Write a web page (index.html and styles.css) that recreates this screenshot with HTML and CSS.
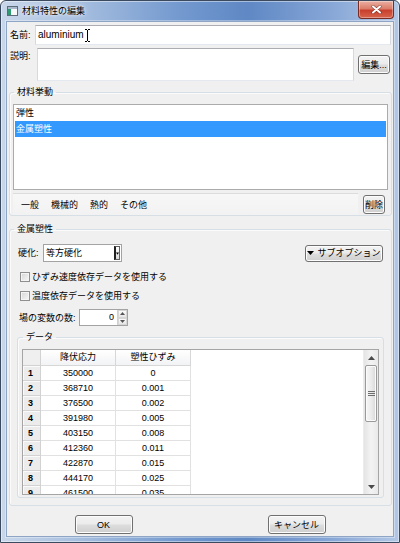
FILE: index.html
```html
<!DOCTYPE html>
<html lang="ja">
<head>
<meta charset="utf-8">
<title>材料特性の編集</title>
<link rel="stylesheet" href="styles.css">
</head>
<body>
<div class="window">
  <div class="titlebar">
    <svg class="app-icon" width="11" height="10" viewBox="0 0 11 10">
      <rect x="0.5" y="0.5" width="10" height="9" fill="#f6f8fa" stroke="#5d6b7a"/>
      <rect x="1" y="1" width="9" height="2" fill="#a9b9cc"/>
      <rect x="1" y="3" width="3" height="6" fill="#2f9a72"/>
    </svg>
    <span class="title">材料特性の編集</span>
    <div class="close">
      <svg width="11" height="9" viewBox="0 0 11 9">
        <path d="M2 1.5 L9 7.5 M9 1.5 L2 7.5" stroke="#5a1a12" stroke-width="3.2" stroke-linecap="round" opacity="0.55"/>
        <path d="M2 1.5 L9 7.5 M9 1.5 L2 7.5" stroke="#ffffff" stroke-width="2" stroke-linecap="round"/>
      </svg>
    </div>
  </div>
  <div class="client">
    <div class="name-row">
      <span class="lbl name-lbl">名前:</span>
      <div class="textbox"><span class="tb-text">aluminium</span>
        <svg class="ibeam" width="5" height="13" viewBox="0 0 5 13">
          <path d="M0 0.5 H2 M3 0.5 H5 M2.5 1 V12 M0 12.5 H2 M3 12.5 H5" stroke="#000" stroke-width="1" fill="none"/>
        </svg>
      </div>
    </div>
    <div class="desc-row">
      <span class="lbl desc-lbl">説明:</span>
      <div class="textarea"></div>
      <div class="btn btn-edit">編集...</div>
    </div>

    <fieldset class="group behaviors">
      <legend>材料挙動</legend>
      <div class="listbox">
        <div class="item">弾性</div>
        <div class="item selected">金属塑性</div>
      </div>
      <div class="tabs-row">
        <div class="tabstrip">
          <span class="tab">一般</span>
          <span class="tab">機械的</span>
          <span class="tab">熱的</span>
          <span class="tab">その他</span>
        </div>
        <div class="btn btn-del">削除</div>
      </div>
    </fieldset>

    <fieldset class="group plasticity">
      <legend>金属塑性</legend>
      <div class="hard-row">
        <span class="hard-lbl">硬化:</span>
        <div class="combo">
          <span class="combo-text">等方硬化</span>
          <span class="combo-btn">
            <svg width="4" height="3" viewBox="0 0 4 3"><path d="M0 0 H4 L2 3 Z" fill="#000"/></svg>
          </span>
        </div>
        <div class="btn btn-sub">
          <svg class="sub-tri" width="7" height="4" viewBox="0 0 7 4"><path d="M0 0 H7 L3.5 4 Z" fill="#000"/></svg>
          <span>サブオプション</span>
        </div>
      </div>
      <div class="check-row first"><span class="checkbox"></span><span>ひずみ速度依存データを使用する</span></div>
      <div class="check-row second"><span class="checkbox"></span><span>温度依存データを使用する</span></div>
      <div class="field-row">
        <span class="field-lbl">場の変数の数:</span>
        <div class="spin">
          <span class="spin-val">0</span>
          <div class="spin-btns">
            <span class="spin-up"><svg width="5" height="3" viewBox="0 0 5 3"><path d="M0 3 H5 L2.5 0 Z" fill="#555"/></svg></span>
            <span class="spin-down"><svg width="5" height="3" viewBox="0 0 5 3"><path d="M0 0 H5 L2.5 3 Z" fill="#555"/></svg></span>
          </div>
        </div>
      </div>

      <fieldset class="group data">
        <legend>データ</legend>
        <div class="grid-wrap">
          <div class="grid-view">
            <div class="grid">
              <div class="corner"></div>
              <div class="hd">降伏応力</div>
              <div class="hd">塑性ひずみ</div>

              <div class="rh">1</div><div class="c">350000</div><div class="c">0</div>
              <div class="rh">2</div><div class="c">368710</div><div class="c">0.001</div>
              <div class="rh">3</div><div class="c">376500</div><div class="c">0.002</div>
              <div class="rh">4</div><div class="c">391980</div><div class="c">0.005</div>
              <div class="rh">5</div><div class="c">403150</div><div class="c">0.008</div>
              <div class="rh">6</div><div class="c">412360</div><div class="c">0.011</div>
              <div class="rh">7</div><div class="c">422870</div><div class="c">0.015</div>
              <div class="rh">8</div><div class="c">444170</div><div class="c">0.025</div>
              <div class="rh">9</div><div class="c">461500</div><div class="c">0.035</div>
            </div>
          </div>
          <div class="vscroll">
            <div class="sb-btn"><svg width="7" height="4" viewBox="0 0 7 4"><path d="M0 4 H7 L3.5 0 Z" fill="#4a4a4a"/></svg></div>
            <div class="sb-thumb">
              <svg width="7" height="6" viewBox="0 0 7 6"><path d="M0 0.5 H7 M0 2.5 H7 M0 4.5 H7" stroke="#6e6e6e" stroke-width="1"/></svg>
            </div>
            <div class="sb-track"></div>
            <div class="sb-btn down"><svg width="7" height="4" viewBox="0 0 7 4"><path d="M0 0 H7 L3.5 4 Z" fill="#4a4a4a"/></svg></div>
          </div>
        </div>
      </fieldset>
    </fieldset>

    <div class="buttons">
      <div class="btn-cell"><div class="btn btn-dlg">OK</div></div>
      <div class="btn-cell"><div class="btn btn-dlg">キャンセル</div></div>
    </div>
  </div>
</div>
</body>
</html>
```

FILE: styles.css
```css
* { box-sizing: border-box; }
html, body { margin: 0; padding: 0; }
body {
  width: 400px;
  height: 543px;
  overflow: hidden;
  background: #ffffff;
  font-family: "Liberation Sans", "Noto Sans CJK JP", sans-serif;
  font-size: 9px;
  color: #000;
}

/* ---------- window frame ---------- */
.window {
  width: 400px;
  height: 543px;
  display: flex;
  flex-direction: column;
  border: 1px solid #3c4a60;
  border-radius: 6px 6px 0 0;
  padding: 0 5px 5px 5px;
  background: linear-gradient(90deg, #c9d7ea 0%, #aac1e0 18%, #7399cf 45%, #5f88c4 62%, #85a5d6 82%, #b2c7e5 100%);
  box-shadow: inset 0 0 0 1px rgba(255,255,255,0.45);
}
.titlebar {
  flex: none;
  height: 20px;
  display: flex;
  align-items: center;
}
.app-icon { flex: none; margin: 0 4px 0 1px; }
.title {
  flex: 1;
  line-height: 12px;
  color: #000;
  text-shadow: 0 0 5px rgba(255,255,255,0.95), 0 0 2px rgba(255,255,255,0.9);
}
.close {
  flex: none;
  align-self: flex-start;
  width: 36px;
  height: 18px;
  display: flex;
  align-items: center;
  justify-content: center;
  border: 1px solid #7a2b22;
  border-top: none;
  border-radius: 0 0 4px 4px;
  background: linear-gradient(#eab0a2 0%, #dc7c6a 45%, #c8402d 55%, #d6644c 100%);
  box-shadow: inset 0 0 0 1px rgba(255,255,255,0.35);
}

.client {
  flex: 1;
  display: flex;
  flex-direction: column;
  background: #f0f0f0;
  border: 1px solid #8ea5c6;
  box-shadow: 0 0 0 1px rgba(255,255,255,0.35);
}

/* ---------- common controls ---------- */
.btn {
  display: flex;
  align-items: center;
  justify-content: center;
  border: 1px solid #707070;
  border-radius: 3px;
  background: linear-gradient(#f3f3f3 0%, #ebebeb 48%, #dddddd 52%, #cfcfcf 100%);
  box-shadow: inset 0 0 0 1px #fcfcfc;
  line-height: 12px;
  color: #000;
  white-space: nowrap;
}
.lbl { flex: none; line-height: 12px; }

/* ---------- name / description ---------- */
.name-row {
  display: flex;
  align-items: center;
  margin-top: 3px;
  padding: 0 2px 0 3px;
}
.name-lbl { width: 25px; }
.textbox {
  flex: 1;
  height: 20px;
  display: flex;
  align-items: center;
  padding-left: 2px;
  background: #fff;
  border: 1px solid;
  border-color: #abadb3 #d6dae0 #e3e9ef #d6dae0;
  font-size: 10px;
}
.tb-text { line-height: 14px; color: #000; }
.ibeam { margin-left: 1px; }

.desc-row {
  display: flex;
  align-items: center;
  margin-top: 3px;
  padding: 0 3px 0 3px;
}
.desc-lbl { width: 27px; align-self: flex-start; padding-top: 2px; }
.textarea {
  flex: 1;
  height: 33px;
  background: #fff;
  border: 1px solid;
  border-color: #abadb3 #d6dae0 #e3e9ef #d6dae0;
}
.btn-edit { flex: none; width: 32px; height: 19px; margin-left: 4px; }

/* ---------- group boxes ---------- */
.group {
  min-width: 0;
  border: 1px solid #d5dfe5;
  border-radius: 3px;
  box-shadow: inset 1px 1px 0 #fbfbfb;
}
.group > legend {
  padding: 0 3px;
  line-height: 12px;
  color: #000;
}

.behaviors {
  margin: 5px 1px 0 2px;
  padding: 6px 3px 0 3px;
}
.behaviors > legend { margin-left: 1px; }

.listbox {
  height: 86px;
  background: #fff;
  border: 1px solid #ababab;
  padding: 0 1px;
}
.item {
  height: 16px;
  line-height: 16px;
  padding-left: 1px;
}
.item.selected { background: #3399ff; color: #fff; }

.tabs-row {
  display: flex;
  height: 22px;
  margin-top: 3px;
}
.tabstrip {
  flex: 1;
  display: flex;
  align-items: center;
  padding: 1px 0 0 2px;
  border-top: 1px solid #dcdcdc;
  background: linear-gradient(#f7f7f7, #f2f2f2);
}
.tab { padding: 0 6px; line-height: 14px; }
.btn-del {
  flex: none;
  width: 22px;
  height: 19px;
  margin: 2px 3px 0 5px;
}

/* ---------- metal plasticity ---------- */
.plasticity {
  margin: 7px 1px 0 2px;
  padding: 9px 7px 7px 7px;
}
.plasticity > legend { margin-left: -3px; }

.hard-row {
  display: flex;
  align-items: center;
  height: 18px;
  padding: 0 1px;
}
.hard-lbl { flex: none; width: 25px; line-height: 12px; }
.combo {
  flex: none;
  width: 79px;
  height: 18px;
  display: flex;
  align-items: center;
  padding: 0 1px 0 2px;
  background: #fff;
  border: 1px solid #a3a3a3;
}
.combo-text { flex: 1; line-height: 12px; }
.combo-btn {
  flex: none;
  width: 6px;
  height: 14px;
  display: flex;
  align-items: flex-end;
  justify-content: center;
  padding-bottom: 4px;
  border: 1px solid #606060;
  border-left-width: 2px;
  border-left-color: #202020;
  background: linear-gradient(#ffffff, #d8d8d8);
}
.btn-sub {
  flex: none;
  margin-left: auto;
  width: 78px;
  height: 17px;
}
.sub-tri { margin-right: 3px; }

.check-row {
  display: flex;
  align-items: center;
  height: 14px;
  padding-left: 3px;
  line-height: 12px;
}
.check-row.first { margin-top: 8px; }
.check-row.second { margin-top: 5px; }
.checkbox {
  flex: none;
  width: 10px;
  height: 10px;
  margin-right: 2px;
  border: 1px solid #8f8f8f;
  background: linear-gradient(135deg, #d4d4d4 0%, #e8e8e8 55%, #f7f7f7 100%);
  box-shadow: inset 0 0 0 1px #f4f4f4;
}

.field-row {
  display: flex;
  align-items: center;
  height: 17px;
  margin-top: 6px;
  padding-left: 2px;
}
.field-lbl { flex: none; width: 60px; line-height: 12px; }
.spin {
  flex: none;
  width: 49px;
  height: 17px;
  display: flex;
  background: #fff;
  border: 1px solid #a3a3a3;
}
.spin-val {
  flex: 1;
  text-align: right;
  padding-right: 3px;
  line-height: 15px;
}
.spin-btns {
  flex: none;
  width: 10px;
  display: flex;
  flex-direction: column;
  border-left: 1px solid #d0d0d0;
}
.spin-up, .spin-down {
  flex: 1;
  display: flex;
  align-items: center;
  justify-content: center;
  background: linear-gradient(#fbfbfb, #e6e6e6);
  border: 1px solid #d6d6d6;
}

/* ---------- data table ---------- */
.data {
  margin: 5px 0 0 0;
  padding: 6px 4px 2px 4px;
}
.data > legend { margin-left: 1px; }

.grid-wrap {
  height: 146px;
  display: flex;
  border: 1px solid #a5a5a5;
  background: #fff;
}
.grid-view {
  flex: 1;
  overflow: hidden;
  background: #fff;
}
.grid {
  display: grid;
  grid-template-columns: 18px 75px 75px;
  grid-template-rows: 16px;
  grid-auto-rows: 15px;
  width: 168px;
}
.grid > div {
  border-right: 1px solid #e1e1e1;
  border-bottom: 1px solid #e1e1e1;
  line-height: 14px;
  text-align: center;
  white-space: nowrap;
  overflow: hidden;
}
.grid .corner {
  background: #efefef;
  border-color: #d2d2d2;
}
.grid .hd {
  line-height: 15px;
  background: linear-gradient(#ffffff, #f2f3f5);
  border-color: #d7d7d7;
}
.grid .rh {
  font-weight: bold;
  padding-right: 2px;
  background: #ececec;
  border-color: #d2d2d2;
  box-shadow: inset 1px 1px 0 #fafafa;
}
.grid .c { background: #fff; }

.vscroll {
  flex: none;
  width: 15px;
  display: flex;
  flex-direction: column;
  background: linear-gradient(90deg, #e4e4e4, #f3f3f3 50%, #e9e9e9);
  border-left: 1px solid #ececec;
}
.sb-btn {
  flex: none;
  height: 15px;
  display: flex;
  align-items: center;
  justify-content: center;
}
.sb-thumb {
  flex: none;
  height: 57px;
  margin: 0 1px;
  display: flex;
  align-items: center;
  justify-content: center;
  border: 1px solid #9a9a9a;
  border-radius: 2px;
  background: linear-gradient(90deg, #f6f6f6 0%, #ececec 50%, #d9d9d9 100%);
  box-shadow: inset 0 0 0 1px #fbfbfb;
}
.sb-track { flex: 1; }

/* ---------- dialog buttons ---------- */
.buttons {
  display: grid;
  grid-template-columns: 1fr 1fr;
  margin-top: 9px;
}
.btn-cell { display: flex; justify-content: center; }
.btn-dlg { width: 58px; height: 19px; }
```
